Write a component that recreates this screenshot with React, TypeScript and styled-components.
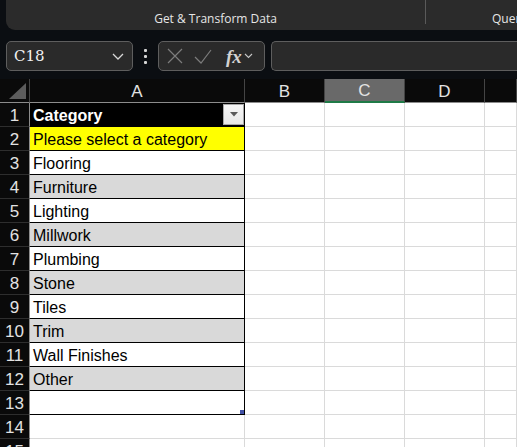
import styled, { createGlobalStyle } from 'styled-components';

const GlobalStyle = createGlobalStyle`
  html, body {
    margin: 0;
    padding: 0;
    background: #0b0e12;
  }
  body {
    width: 517px;
    height: 447px;
    overflow: hidden;
    font-family: "Liberation Sans", Arial, sans-serif;
  }
`;

type Variant = 'head' | 'prompt' | 'odd' | 'even';

const categories = [
  'Flooring',
  'Furniture',
  'Lighting',
  'Millwork',
  'Plumbing',
  'Stone',
  'Tiles',
  'Trim',
  'Wall Finishes',
  'Other',
  '',
];

const columns = ['A', 'B', 'C', 'D', ''];

const App = () => {
  const rows: { label: string; variant: Variant }[] = [
    { label: 'Category', variant: 'head' },
    { label: 'Please select a category', variant: 'prompt' },
    ...categories.map((label, i) => ({
      label,
      variant: (i % 2 === 0 ? 'odd' : 'even') as Variant,
    })),
  ];

  return (
    <>
      <GlobalStyle />
      <Ribbon>
        <RibbonPanel>
          <RibbonGroup>Get &amp; Transform Data</RibbonGroup>
          <RibbonDivider />
          <RibbonGroupClipped>Queries &amp; Connections</RibbonGroupClipped>
        </RibbonPanel>
      </Ribbon>

      <FormulaBar>
        <NameBox>
          <span>C18</span>
          <svg width="12" height="7" viewBox="0 0 12 7">
            <path d="M1 1l5 5 5-5" fill="none" stroke="#d8d8d8" strokeWidth="1.3" />
          </svg>
        </NameBox>
        <Dots>
          <i />
          <i />
          <i />
        </Dots>
        <FxBox>
          <svg width="16" height="16" viewBox="0 0 16 16">
            <path d="M1 1l14 14M15 1L1 15" stroke="#7c7c7c" strokeWidth="1.2" />
          </svg>
          <svg width="18" height="15" viewBox="0 0 18 15">
            <path d="M1 8l6 6L17 1" fill="none" stroke="#7c7c7c" strokeWidth="1.2" />
          </svg>
          <FxLabel>fx</FxLabel>
          <svg width="9" height="6" viewBox="0 0 9 6">
            <path d="M1 1l3.5 3.5L8 1" fill="none" stroke="#c8c8c8" strokeWidth="1.1" />
          </svg>
        </FxBox>
        <FormulaInput />
      </FormulaBar>

      <Sheet>
        <Corner>
          <svg width="18" height="16" viewBox="0 0 18 16">
            <path d="M17 0v16H0z" fill="#5c5c5c" />
          </svg>
        </Corner>
        {columns.map((c, i) => (
          <ColHeader key={i} $active={c === 'C'}>
            {c}
          </ColHeader>
        ))}

        {Array.from({ length: 15 }, (_, r) => {
          const row = rows[r];
          return [
            <RowHeader key={`h${r}`}>{r + 1}</RowHeader>,
            row ? (
              <TableCell key={`a${r}`} $variant={row.variant}>
                {row.label}
                {row.variant === 'head' && (
                  <FilterButton>
                    <svg width="8" height="5" viewBox="0 0 8 5">
                      <path d="M0 0h8L4 4.5z" fill="#5a5a5a" />
                    </svg>
                  </FilterButton>
                )}
                {r === rows.length - 1 && <ResizeHandle />}
              </TableCell>
            ) : (
              <Cell key={`a${r}`} />
            ),
            <Cell key={`b${r}`} />,
            <Cell key={`c${r}`} />,
            <Cell key={`d${r}`} />,
            <Cell key={`e${r}`} />,
          ];
        })}
      </Sheet>
    </>
  );
};

export default App;

const Ribbon = styled.div`
  height: 30px;
  padding-left: 6px;
`;

const RibbonPanel = styled.div`
  display: flex;
  height: 30px;
  background: #2b2b2b;
  border-bottom-left-radius: 9px;
  overflow: hidden;
  font-family: "Open Sans", "Noto Sans", sans-serif;
  font-size: 12px;
  color: #e6e6e6;
`;

const RibbonGroup = styled.div`
  width: 419px;
  flex-shrink: 0;
  text-align: center;
  padding-top: 10px;
  line-height: 18px;
  white-space: nowrap;
`;

const RibbonGroupClipped = styled(RibbonGroup)`
  width: auto;
  text-align: left;
  padding-left: 66px;
`;

const RibbonDivider = styled.div`
  width: 1px;
  height: 24px;
  flex-shrink: 0;
  background: #5a5a5a;
`;

const FormulaBar = styled.div`
  display: flex;
  align-items: center;
  height: 30px;
  margin: 11px 0 8px 6px;
`;

const BarBox = styled.div`
  box-sizing: border-box;
  height: 30px;
  background: #2a2a2a;
  border: 1px solid #5e5e5e;
  border-radius: 5px;
  display: flex;
  align-items: center;
`;

const NameBox = styled(BarBox)`
  width: 127px;
  padding: 0 8px 0 7px;
  justify-content: space-between;
  color: #f2f2f2;
  font-family: "DejaVu Serif", "Liberation Serif", serif;
  font-size: 15px;
`;

const Dots = styled.div`
  width: 25px;
  display: flex;
  flex-direction: column;
  align-items: center;
  gap: 3px;

  i {
    width: 3px;
    height: 3px;
    background: #d6d6d6;
    border-radius: 1px;
  }
`;

const FxBox = styled(BarBox)`
  width: 107px;
  padding: 0 4px 0 8px;
  gap: 11px;

  svg:last-child {
    margin-left: -9px;
  }
`;

const FxLabel = styled.span`
  font-family: "Liberation Serif", serif;
  font-style: italic;
  font-weight: bold;
  font-size: 19px;
  color: #d2d2d2;
  line-height: 1;
  margin-left: 3px;
`;

const FormulaInput = styled(BarBox)`
  flex: 1;
  margin-left: 6px;
  border-right: none;
  border-top-right-radius: 0;
  border-bottom-right-radius: 0;
`;

const Sheet = styled.div`
  display: grid;
  grid-template-columns: 30px 215px 80px 80px 80px 1fr;
  grid-auto-rows: 24px;
  background: #ffffff;
`;

const HeaderBase = styled.div`
  box-sizing: border-box;
  background: #0a0a0a;
  color: #e2e2e2;
  font-size: 17px;
  display: flex;
  align-items: center;
  justify-content: center;
`;

const Corner = styled(HeaderBase)`
  border-right: 1px solid #444;
  border-bottom: 1px solid #8c8c8c;
  align-items: flex-end;
  justify-content: flex-end;
  padding: 0 2px 3px 0;
`;

const ColHeader = styled(HeaderBase)<{ $active?: boolean }>`
  border-right: 1px solid #444;
  border-bottom: ${(p) => (p.$active ? '2px solid #1f7a47' : '1px solid #8c8c8c')};
  background: ${(p) => (p.$active ? '#696969' : '#0a0a0a')};
  padding-top: 2px;
`;

const RowHeader = styled(HeaderBase)`
  border-right: 1px solid #8c8c8c;
  border-bottom: 1px solid #2e2e2e;
  padding-top: 3px;
`;

const Cell = styled.div`
  box-sizing: border-box;
  background: #ffffff;
  border-right: 1px solid #dadada;
  border-bottom: 1px solid #dadada;
`;

const fills: Record<Variant, string> = {
  head: '#000000',
  prompt: '#ffff00',
  odd: '#ffffff',
  even: '#d9d9d9',
};

const TableCell = styled(Cell)<{ $variant: Variant }>`
  position: relative;
  display: flex;
  align-items: center;
  padding: 3px 0 0 3px;
  border-right-color: #000;
  border-bottom-color: #000;
  background: ${(p) => fills[p.$variant]};
  color: ${(p) => (p.$variant === 'head' ? '#ffffff' : '#000000')};
  font-weight: ${(p) => (p.$variant === 'head' ? 'bold' : 'normal')};
  font-size: 16px;
  white-space: nowrap;
`;

const FilterButton = styled.div`
  position: absolute;
  right: 0;
  top: 1px;
  box-sizing: border-box;
  width: 21px;
  height: 21px;
  background: linear-gradient(#f6f6f6, #e8e8e8);
  border: 1px solid #a8a8a8;
  display: flex;
  align-items: center;
  justify-content: center;
`;

const ResizeHandle = styled.div`
  position: absolute;
  right: 0;
  bottom: 0;
  width: 4px;
  height: 4px;
  background: #4252a6;
`;
